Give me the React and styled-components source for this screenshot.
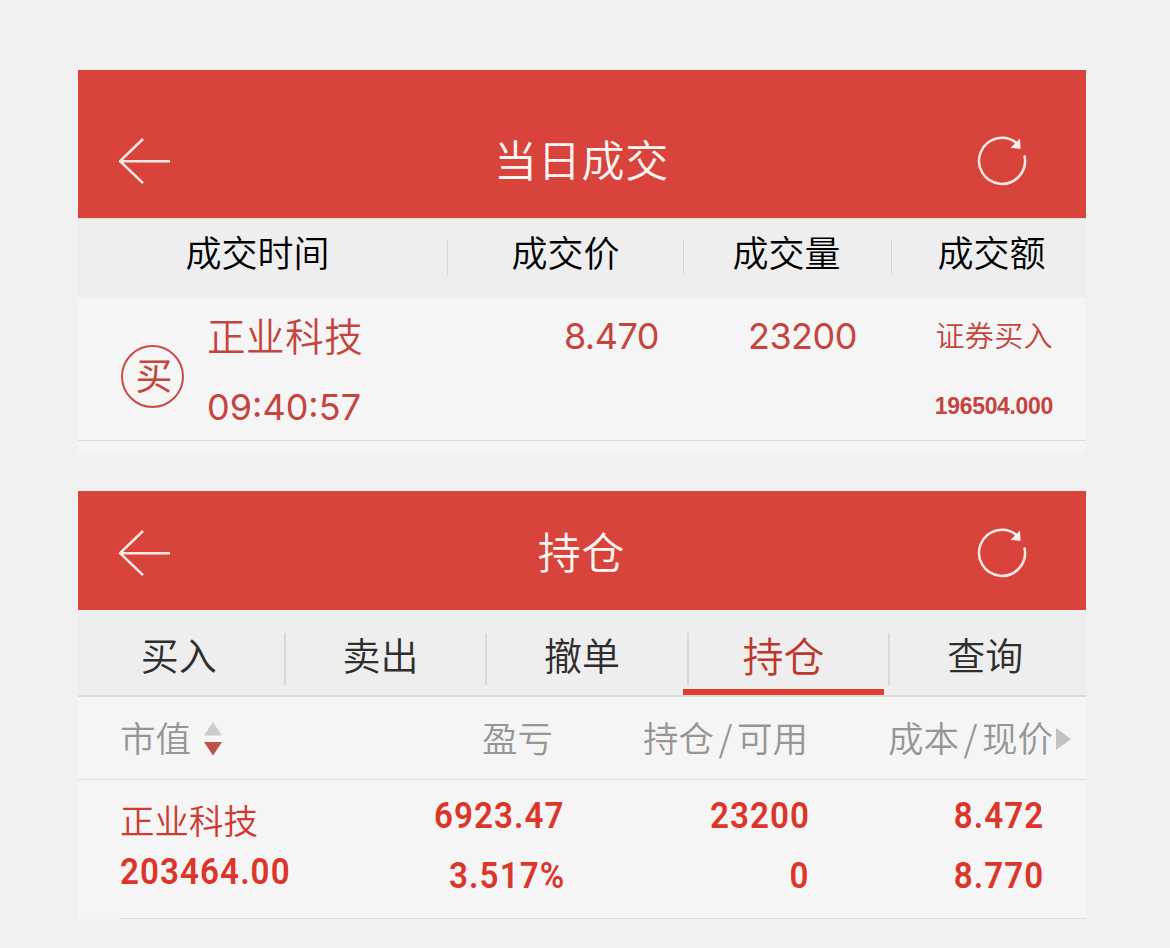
import React from 'react';
import styled, { createGlobalStyle, css } from 'styled-components';

const GlobalStyle = createGlobalStyle`
  * { box-sizing: border-box; }
  body { margin: 0; background: #f1f1f1; font-family: 'Noto Sans CJK SC', sans-serif; font-weight: 350; }
`;

const Page = styled.main`
  width: 1170px;
  height: 948px;
  padding: 70px 84px 0 78px;
  display: flex;
  flex-direction: column;
  gap: 38px;
  overflow: hidden;
`;

const Panel = styled.section`
  background: #f5f5f5;
  height: ${(p) => p.$height}px;
  display: flex;
  flex-direction: column;
`;

const Header = styled.header`
  height: ${(p) => p.$height}px;
  flex: none;
  padding: ${(p) => p.$top}px 56px 0 39px;
  background: #d8433b;
  display: grid;
  grid-template-columns: 57px 1fr 56px;
  align-items: center;
`;

const Title = styled.h1`
  margin: 0;
  padding-left: 15px;
  font-size: 43px;
  line-height: 60px;
  letter-spacing: 0.7px;
  font-weight: 350;
  color: #fff6f3;
  text-align: center;
  white-space: nowrap;
  transform: translateY(-3px);
`;

const Icon = styled.svg`
  display: block;
  fill: none;
  stroke: #ffe9e5;
  stroke-width: 2.5;
  stroke-linecap: round;
  justify-self: ${(p) => p.$align || 'start'};
`;

const tradeColumns = css`
  display: grid;
  grid-template-columns: 370px 236px 208px 194px;
`;

const TradeHead = styled.div`
  ${tradeColumns}
  height: 80px;
  flex: none;
  background: #eeeeee;
  border-top: 1px solid #dfd9d8;
`;

const TradeHeadCell = styled.div`
  height: 36px;
  margin-top: 20px;
  padding-left: ${(p) => p.$left || 0}px;
  padding-right: ${(p) => p.$right || 0}px;
  font-size: 36px;
  line-height: 24px;
  color: #000;
  text-align: center;
  white-space: nowrap;
  border-right: ${(p) => (p.$last ? 0 : 1)}px solid #d6d6d6;
`;

const TradeRow = styled.div`
  ${tradeColumns}
  height: 143px;
  flex: none;
  border-bottom: 1px solid #dedede;
  color: #c5443e;
`;

const Security = styled.div`
  display: flex;
  padding-left: 43px;
  gap: 23px;
`;

const Badge = styled.span`
  width: 63px;
  height: 63px;
  margin-top: 47px;
  padding-left: 3px;
  border: 2px solid #c84c47;
  border-radius: 50%;
  display: flex;
  justify-content: center;
  font-size: 37px;
  line-height: 54px;
  font-weight: 400;
`;

const Stack = styled.div`
  display: flex;
  flex-direction: column;
  align-items: ${(p) => p.$align || 'flex-start'};
  padding-right: ${(p) => p.$right || 0}px;
`;

const TradeName = styled.div`
  margin-top: 16px;
  font-size: 38.5px;
  letter-spacing: 0.6px;
  line-height: 40px;
  white-space: nowrap;
`;

const Figure = styled.div`
  margin-top: ${(p) => p.$top}px;
  font-family: Inter, sans-serif;
  font-size: 36px;
  font-weight: 400;
  line-height: 40px;
  letter-spacing: ${(p) => p.$spacing || 0}px;
  white-space: nowrap;
`;

const TradeSide = styled.div`
  margin-top: 16px;
  font-size: 29px;
  line-height: 40px;
  letter-spacing: 0.4px;
  white-space: nowrap;
`;

const Amount = styled.div`
  margin-top: 32px;
  font-family: 'Liberation Sans', sans-serif;
  font-size: 23px;
  font-weight: 700;
  line-height: 41px;
  letter-spacing: -0.33px;
`;

const Tabs = styled.nav`
  height: 87px;
  flex: none;
  display: grid;
  grid-template-columns: repeat(5, 1fr);
  background: #eeeeee;
  border-bottom: 2px solid #d9d9d9;
`;

const Tab = styled.div`
  display: grid;
  align-items: start;
  justify-items: center;
  padding-top: 23px;
  font-size: ${(p) => (p.$active ? 41 : 38)}px;
  line-height: 48px;
  color: ${(p) => (p.$active ? '#bd372c' : '#2e2e2e')};
  border-bottom: ${(p) => (p.$active ? '6px solid #de3f30' : '0')};
  white-space: nowrap;

  & > span { grid-area: 1 / 1; transform: translateY(-3px); }

  &:not(:last-child)::after {
    content: '';
    grid-area: 1 / 1;
    justify-self: end;
    width: 2px;
    height: 52px;
    margin-right: -6px;
    background: #d8d8d8;
  }
`;

const holdingColumns = css`
  display: grid;
  grid-template-columns: 250px 237px 245px 276px;
`;

const HoldingHead = styled.div`
  ${holdingColumns}
  height: 83px;
  flex: none;
  border-bottom: 1px solid #dcdcdc;
  color: #969696;
  font-size: 35.5px;
  line-height: 44px;
`;

const HeadCell = styled.div`
  display: flex;
  align-items: center;
  justify-content: ${(p) => p.$justify || 'flex-end'};
  padding: 2px ${(p) => p.$right || 0}px 1px ${(p) => p.$left || 0}px;
  white-space: nowrap;

  & > span { transform: translateY(-2px); }
`;

const Slash = styled.i`
  font-style: normal;
  margin: 0 4.5px;
`;

const Marker = styled.svg`
  display: block;
  flex: none;
  margin-left: ${(p) => p.$gap}px;
`;

const HoldingRow = styled.div`
  ${holdingColumns}
  height: 139px;
  flex: none;
  color: #dc352a;
  background: linear-gradient(#dcdcdc, #dcdcdc) 42px 100% / 966px 1px no-repeat;
`;

const HoldingName = styled.div`
  margin: 19px 0 0 42px;
  font-size: 34.5px;
  line-height: 40px;
  color: #cf3a31;
  white-space: nowrap;
`;

const Value = styled.div`
  margin-top: ${(p) => p.$top}px;
  margin-left: ${(p) => p.$left || 0}px;
  font-family: Roboto, sans-serif;
  font-size: 37.5px;
  font-weight: 600;
  line-height: 40px;
  letter-spacing: 1.2px;
  transform: scaleX(0.885);
  transform-origin: ${(p) => p.$origin || 'right'} center;
  white-space: nowrap;
`;

const BackIcon = () => (
  <Icon width="56" height="50" viewBox="0 0 56 50">
    <path d="M26 3 3 25.2l23 22M3 25.2h50" strokeLinecap="butt" strokeLinejoin="round" />
  </Icon>
);

const RefreshIcon = () => (
  <Icon $align="end" width="56" height="50" viewBox="0 0 56 50">
    <path d="M50.6 20.5a23 23 0 1 1-8.1-13.5" />
    <path d="M46 2.5 46.5 12.8 36.5 12z" fill="#fff3f0" stroke="none" />
  </Icon>
);

const TABS = ['买入', '卖出', '撤单', '持仓', '查询'];

export default function App() {
  return (
    <>
      <GlobalStyle />
      <Page>
        <Panel $height={383}>
          <Header $height={148} $top={34}>
            <BackIcon />
            <Title>当日成交</Title>
            <RefreshIcon />
          </Header>
          <TradeHead>
            <TradeHeadCell $right={10}>成交时间</TradeHeadCell>
            <TradeHeadCell>成交价</TradeHeadCell>
            <TradeHeadCell $right={2}>成交量</TradeHeadCell>
            <TradeHeadCell $last $left={5}>成交额</TradeHeadCell>
          </TradeHead>
          <TradeRow>
            <Security>
              <Badge>买</Badge>
              <Stack>
                <TradeName>正业科技</TradeName>
                <Figure $top={33}>09:40:57</Figure>
              </Stack>
            </Security>
            <Stack $align="flex-end" $right={25}><Figure $top={18} $spacing={-0.5}>8.470</Figure></Stack>
            <Stack $align="flex-end" $right={35}><Figure $top={18} $spacing={-0.5}>23200</Figure></Stack>
            <Stack $align="flex-end" $right={33}>
              <TradeSide>证券买入</TradeSide>
              <Amount>196504.000</Amount>
            </Stack>
          </TradeRow>
        </Panel>

        <Panel $height={428}>
          <Header $height={119} $top={5}>
            <BackIcon />
            <Title>持仓</Title>
            <RefreshIcon />
          </Header>
          <Tabs>
            {TABS.map((label) => (
              <Tab key={label} $active={label === '持仓'}><span>{label}</span></Tab>
            ))}
          </Tabs>
          <HoldingHead>
            <HeadCell $justify="flex-start" $left={42}>
              <span>市值</span>
              <Marker $gap={13} width="18" height="34" viewBox="0 0 18 34">
                <path d="M0 13.5 9 0l9 13.5z" fill="#cccccc" />
                <path d="M0 20h18L9 33.5z" fill="#bf5148" />
              </Marker>
            </HeadCell>
            <HeadCell $right={12}><span>盈亏</span></HeadCell>
            <HeadCell $right={2}><span>持仓<Slash>/</Slash>可用</span></HeadCell>
            <HeadCell $right={15}>
              <span>成本<Slash>/</Slash>现价</span>
              <Marker $gap={3} width="15" height="22" viewBox="0 0 15 22">
                <path d="M0 0 15 11 0 22z" fill="#c3c0bf" />
              </Marker>
            </HeadCell>
          </HoldingHead>
          <HoldingRow>
            <Stack>
              <HoldingName>正业科技</HoldingName>
              <Value $top={12} $left={42} $origin="left">203464.00</Value>
            </Stack>
            <Stack $align="flex-end"><Value $top={15}>6923.47</Value><Value $top={20}>3.517%</Value></Stack>
            <Stack $align="flex-end"><Value $top={15}>23200</Value><Value $top={20}>0</Value></Stack>
            <Stack $align="flex-end" $right={42}><Value $top={15}>8.472</Value><Value $top={20}>8.770</Value></Stack>
          </HoldingRow>
        </Panel>
      </Page>
    </>
  );
}
